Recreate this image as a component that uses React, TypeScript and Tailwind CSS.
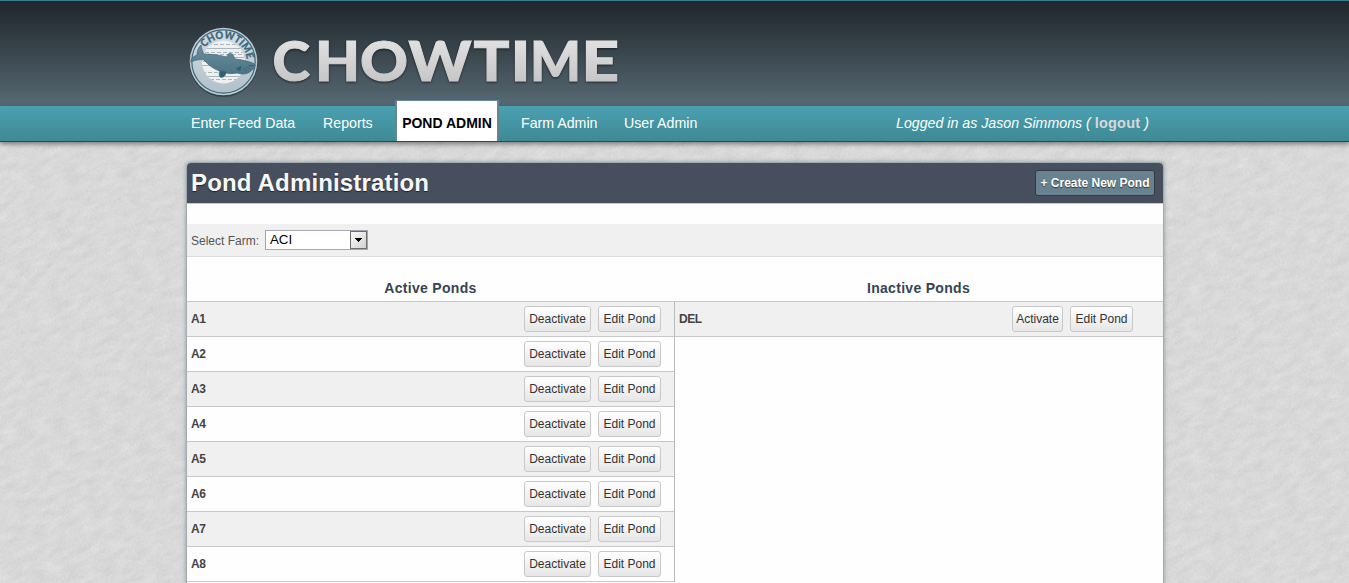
import React from "react";

const activePonds = ["A1", "A2", "A3", "A4", "A5", "A6", "A7", "A8"];

const letters: [string, number, number][] = [
  ["C", 2.5, 37.5],
  ["H", 45, 45],
  ["O", 90, 48],
  ["W", 138.5, 63],
  ["T", 203.5, 36],
  ["I", 240.5, 20],
  ["M", 260, 51],
  ["E", 311.5, 37.5],
];

function Wordmark() {
  return (
    <svg width="360" height="60" viewBox="0 0 360 60" className="block overflow-visible">
      <defs>
        <linearGradient id="silver" gradientUnits="userSpaceOnUse" x1="0" y1="8" x2="0" y2="52">
          <stop offset="0" stopColor="#e2e2e2" />
          <stop offset="1" stopColor="#c6c6c6" />
        </linearGradient>
      </defs>
      <g
        fill="url(#silver)"
        stroke="url(#silver)"
        strokeWidth="1"
        fontFamily="Lato, sans-serif"
        fontWeight="900"
        fontSize="56"
        style={{ filter: "drop-shadow(0 1px 1px rgba(0,0,0,.55))" }}
      >
        {letters.map(([c, x, w]) => (
          <text key={c} x={x} y="50.500" textLength={w} lengthAdjust="spacingAndGlyphs">
            {c}
          </text>
        ))}
      </g>
    </svg>
  );
}

function Emblem() {
  return (
    <svg width="72" height="74" viewBox="0 0 72 74" className="block overflow-visible">
      <defs>
        <linearGradient id="ring" x1="0" y1="0" x2="0" y2="1">
          <stop offset="0" stopColor="#d3dde2" />
          <stop offset="1" stopColor="#b0c1ca" />
        </linearGradient>
        <linearGradient id="fish" x1="0" y1="0" x2="0" y2="1">
          <stop offset="0" stopColor="#6d8e9c" />
          <stop offset="1" stopColor="#4d7485" />
        </linearGradient>
        <path id="arc" d="M16.8 21.6 A23.7 23.7 0 0 1 59 38" />
        <clipPath id="pool">
          <circle cx="35.5" cy="36" r="21.5" />
        </clipPath>
      </defs>
      <circle cx="35.5" cy="37" r="34" fill="#20333e" opacity=".6" />
      <circle cx="35.5" cy="35.5" r="33.8" fill="#bccbd3" />
      <circle cx="35.5" cy="35.5" r="31.7" fill="url(#ring)" stroke="#3d687b" strokeWidth="1.2" />
      <circle cx="35.5" cy="36" r="21.5" fill="#eef0f1" />
      <g clipPath="url(#pool)" stroke="#a9b6bc" strokeWidth="1" fill="none">
        <path d="M14 22.5h43M14 31.5h43M14 39.5h43M14 50.5h43" />
        <path strokeDasharray="4 2" d="M14 18.5h43M17 26.5h43M14 28.5h43M15 35.5h43M14 46.5h43M16 53.5h43" />
      </g>
      <text fontFamily="Lato, sans-serif" fontWeight="900" fontSize="10.5" fill="#3d687b" stroke="#3d687b" strokeWidth=".3">
        <textPath href="#arc" startOffset="0" textLength="55" lengthAdjust="spacingAndGlyphs">
          CHOWTIME
        </textPath>
      </text>
      <path
        d="M13 19 C14 22 14 26 16 28 C23 28 31 29 39 31 C39 28 42 26 45 29 L47 33 C53 33.5 60 35 66 37.5 C68 40 66 43 64 44 C61 48 55 49 49 47 C44 48 40 48 36 46 C29 45 22 41 16 34 C12 33 7 34 3 36 C2.5 34 4 31 9 29 C9 25 10 22 13 19Z"
        fill="url(#fish)"
        stroke="#3f687a"
        strokeWidth=".7"
      />
      <path
        d="M32 45l6 1c0 4-3 6-6 5 -1-2-1-4 0-6zM48 43l5-3-1 5M60 39c3 1.500 5 1 6.500 0M55 42l4 3M58 41l4 2"
        fill="#2f6078"
        stroke="#2f6078"
        strokeWidth=".7"
      />
    </svg>
  );
}

function GreyButton({ children, className }: { children: React.ReactNode; className: string }) {
  return (
    <button
      className={`h-[26px] shrink-0 rounded-[3px] border border-[#c8c8c8] bg-linear-to-b from-white to-[#e6e6e6] text-center text-[12px] leading-[24px] whitespace-nowrap text-[#333] ${className}`}
    >
      {children}
    </button>
  );
}

function PondRow({ name, action, wide, shaded }: { name: string; action: string; wide?: boolean; shaded: boolean }) {
  return (
    <div
      className={`flex h-[35px] items-center border-b border-[#c8c8c8] pl-1 ${wide ? "pr-[30px]" : "pr-[13px]"} ${shaded ? "bg-[#f0f0f0]" : "bg-[#fefefe]"}`}
    >
      <span className="grow text-[12px] font-bold tracking-[-0.4px] text-[#444]">{name}</span>
      <div className="flex gap-[7px]">
        <GreyButton className={wide ? "w-[51px]" : "w-[67px]"}>{action}</GreyButton>
        <GreyButton className="w-[63px]">Edit Pond</GreyButton>
      </div>
    </div>
  );
}

export default function App() {
  return (
    <div className="relative isolate flow-root h-[583px] overflow-hidden bg-[#d5d5d5] font-['Liberation_Sans',Arial,sans-serif]">
      <svg className="absolute inset-0 -z-10 h-full w-full" aria-hidden="true">
        <filter id="paper" x="0" y="0" width="100%" height="100%" colorInterpolationFilters="sRGB">
          <feTurbulence type="fractalNoise" baseFrequency="0.06 0.14" numOctaves="2" seed="4" result="soft" />
          <feTurbulence type="fractalNoise" baseFrequency="0.5" numOctaves="2" seed="9" result="grain" />
          <feComposite in="soft" in2="grain" operator="arithmetic" k2="0.5" k3="0.5" />
          <feColorMatrix values="0.14 0 0 0 0.778  0.14 0 0 0 0.778  0.14 0 0 0 0.778  0 0 0 0 1" />
        </filter>
        <g transform="rotate(-25)">
          <rect x="-300" y="-50" width="1700" height="1250" filter="url(#paper)" />
        </g>
      </svg>

      <header className="h-[106px] border-t border-[#35808f] bg-linear-to-b from-[#20262c] to-[#576a74]">
        <div className="ml-[186px] flex w-[977px] pt-[25px] pl-[2px]">
          <Emblem />
          <div className="pt-[4px] pl-[10px]">
            <Wordmark />
          </div>
        </div>
      </header>

      <nav className="h-[36px] border-b border-[#1f4e57] bg-linear-to-b from-[#4aa1b1] to-[#3f8995] text-[14.2px] text-white shadow-[0_2px_5px_rgba(0,0,0,0.45)]">
        <div className="ml-[186px] flex h-[35px] w-[977px] items-center pl-[5px]">
          <a className="w-[132px]">Enter Feed Data</a>
          <a className="w-[72px]">Reports</a>
          <a className="-mt-[6px] flex h-[41px] w-[104px] items-center justify-center border-x-2 border-t border-[#648594] bg-white pt-[5px] text-[14px] font-bold text-black">
            POND ADMIN
          </a>
          <a className="ml-[22px] w-[103px]">Farm Admin</a>
          <a className="w-[272px]">User Admin</a>
          <span className="whitespace-nowrap italic">
            Logged in as Jason Simmons ({" "}
            <b className="text-[14.5px] tracking-[0.2px] text-[#d8d8d8] not-italic">logout</b> )
          </span>
        </div>
      </nav>

      <main className="mt-[20px] ml-[186px] w-[978px] overflow-hidden rounded-t-[5px] border border-b-0 border-[#a0abb0] bg-[#fefefe] pb-4 shadow-[0_0_4px_rgba(90,110,120,0.6)]">
        <div className="flex h-[41px] items-center justify-between border-b border-[#c5c9cd] bg-[#474f5e] pr-[8px] pl-[4px]">
          <h1 className="text-[24px] font-bold tracking-[0.16px] text-[#f7f7f7] [text-shadow:0_1px_1px_#222]">
            Pond Administration
          </h1>
          <button className="h-[26px] w-[120px] rounded-[3px] border border-[#333a42] bg-[#68838f] text-[12px] leading-[24px] font-bold whitespace-nowrap text-white [text-shadow:0_1px_1px_#333]">
            + Create New Pond
          </button>
        </div>
        <div className="mt-[20px] flex h-[33px] items-center border-b border-[#dcdcdc] bg-[#f0f0f0] pl-[4px]">
          <label className="w-[74px] pt-px text-[12px] text-[#555]">Select Farm:</label>
          <div className="flex h-[20px] w-[103px] justify-between border border-[#a5a5ad] bg-white pl-[4px] text-[13.3px] leading-[18px] text-black">
            ACI
            <span className="flex h-[18px] w-[17px] items-center justify-center border border-[#6c6c6c] bg-linear-to-br from-[#fafafa] to-[#d2d2d2]">
              <svg width="7" height="4" viewBox="0 0 7 4" shapeRendering="crispEdges">
                <path d="M0 0h7L3.5 4z" />
              </svg>
            </span>
          </div>
        </div>
        <div className="flex">
          <section className="w-[487px]">
            <h2 className="h-[45px] border-b border-[#c8c8c8] pt-[21px] text-center text-[14px] leading-[20px] font-bold tracking-[0.3px] text-[#374450]">
              Active Ponds
            </h2>
            {activePonds.map((name, i) => (
              <PondRow key={name} name={name} action="Deactivate" shaded={i % 2 === 0} />
            ))}
          </section>
          <section className="flex w-[489px] flex-col">
            <h2 className="h-[45px] border-b border-[#c8c8c8] pt-[21px] text-center text-[14px] leading-[20px] font-bold tracking-[0.3px] text-[#374450]">
              Inactive Ponds
            </h2>
            <div className="grow border-l border-[#bbb]">
              <PondRow name="DEL" action="Activate" wide shaded />
            </div>
          </section>
        </div>
      </main>
    </div>
  );
}
